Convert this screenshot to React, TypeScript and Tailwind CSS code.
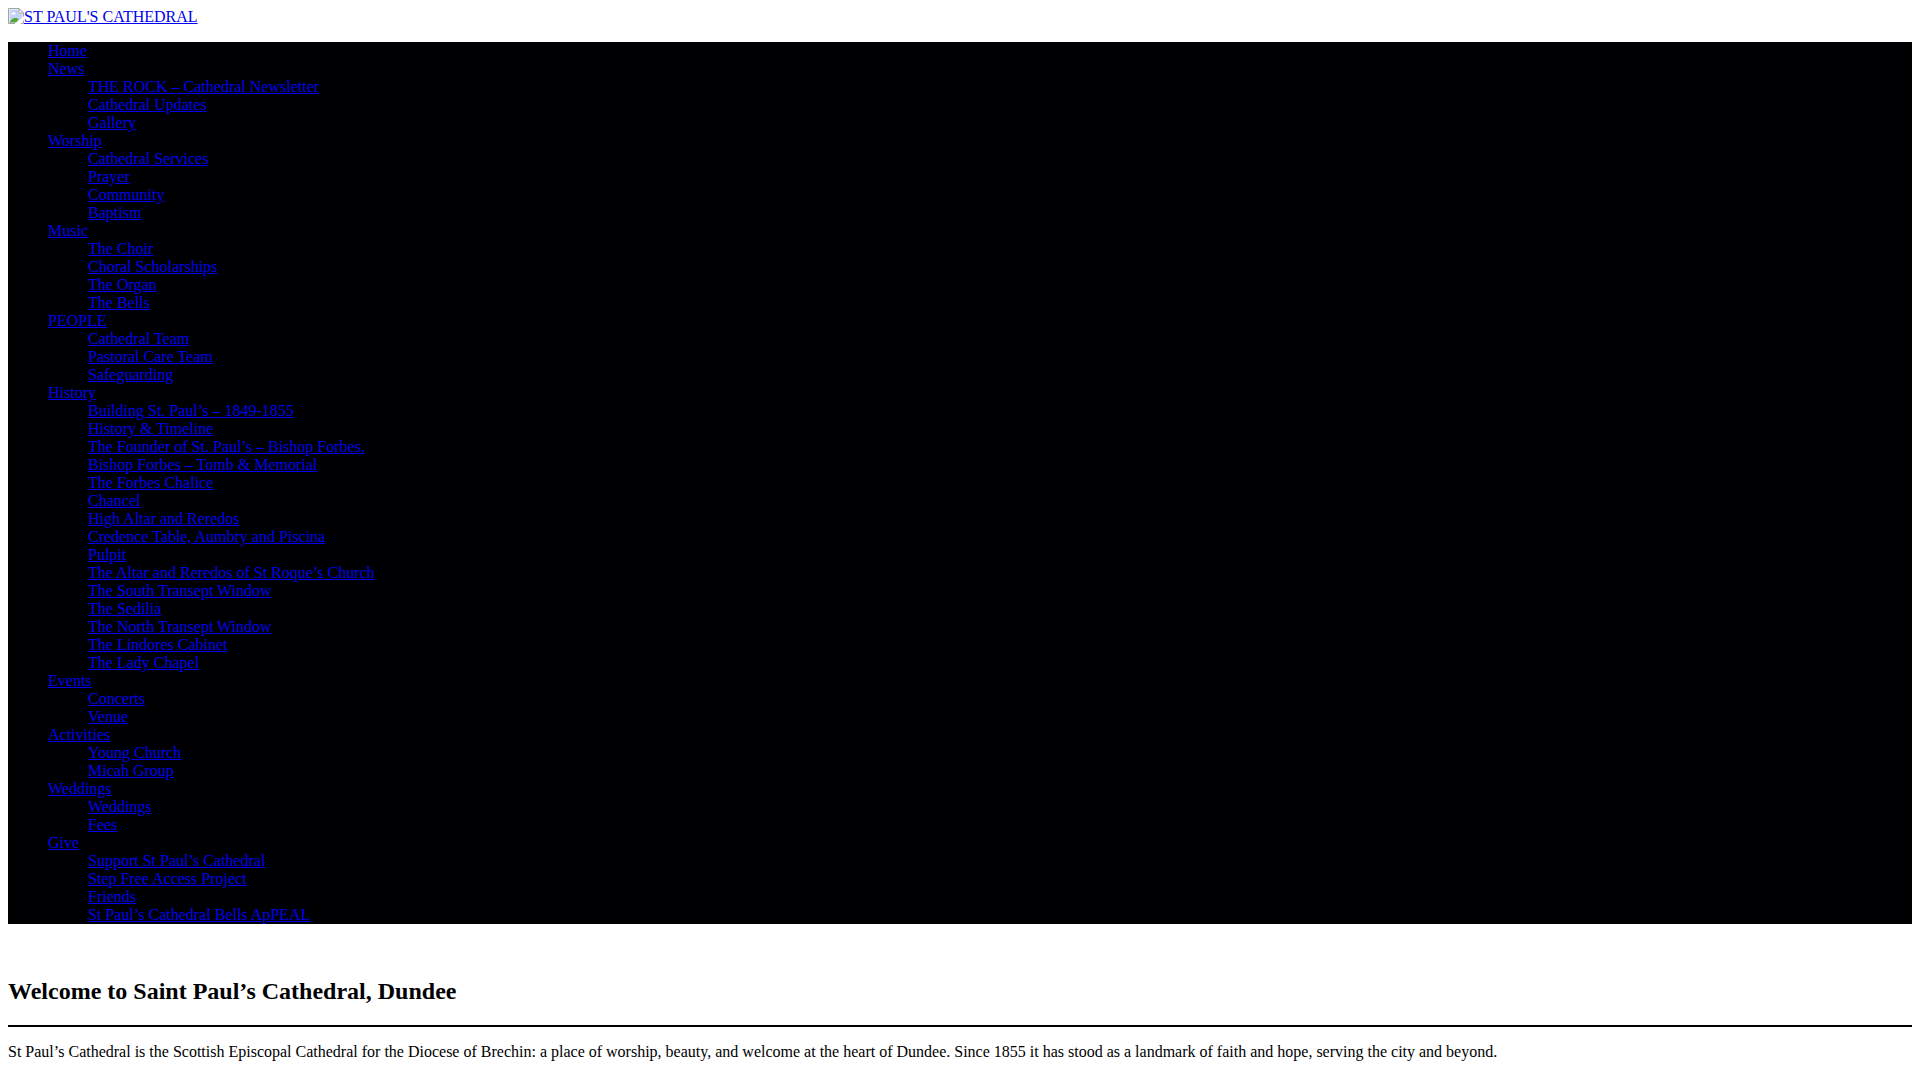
type MenuItem = {
  label: string;
  children?: string[];
};

const menu: MenuItem[] = [
  { label: 'Home' },
  {
    label: 'News',
    children: ['THE ROCK – Cathedral Newsletter', 'Cathedral Updates', 'Gallery'],
  },
  {
    label: 'Worship',
    children: ['Cathedral Services', 'Prayer', 'Community', 'Baptism'],
  },
  {
    label: 'Music',
    children: ['The Choir', 'Choral Scholarships', 'The Organ', 'The Bells'],
  },
  {
    label: 'PEOPLE',
    children: ['Cathedral Team', 'Pastoral Care Team', 'Safeguarding'],
  },
  {
    label: 'History',
    children: [
      'Building St. Paul’s – 1849-1855',
      'History & Timeline',
      'The Founder of St. Paul’s – Bishop Forbes.',
      'Bishop Forbes – Tomb & Memorial',
      'The Forbes Chalice',
      'Chancel',
      'High Altar and Reredos',
      'Credence Table, Aumbry and Piscina',
      'Pulpit',
      'The Altar and Reredos of St Roque’s Church',
      'The South Transept Window',
      'The Sedilia',
      'The North Transept Window',
      'The Lindores Cabinet',
      'The Lady Chapel',
    ],
  },
  { label: 'Events', children: ['Concerts', 'Venue'] },
  { label: 'Activities', children: ['Young Church', 'Micah Group'] },
  { label: 'Weddings', children: ['Weddings', 'Fees'] },
  {
    label: 'Give',
    children: [
      'Support St Paul’s Cathedral',
      'Step Free Access Project',
      'Friends',
      'St Paul’s Cathedral Bells ApPEAL',
    ],
  },
];

const LogoIcon = () => (
  <svg width="16" height="16" viewBox="0 0 16 16" aria-hidden="true" className="shrink-0">
    <path d="M0.5 0.5H11L15.5 5V10L10 15.5H0.5Z" fill="#fff" />
    <path d="M1.5 1.5H10.5V5.5H14.5V9L8.5 14.5H1.5Z" fill="#c1d3f6" />
    <path d="M3 6.5C2.6 5.4 3.6 4.8 4.3 5C4.8 3.7 6.8 3.8 7 5.2C8 5.1 8.2 6 7.8 6.5Z" fill="#fff" />
    <path d="M1.5 14.5C2.6 12 5 10 7.5 10C9 10 10 10.6 10.8 11.5L7.8 14.5Z" fill="#57a639" />
    <path d="M0.5 15.5V0.5H11L15.5 5V8.5M0.5 15.5H7M13 15.5H15.5V12.5" fill="none" stroke="#a3a3a3" />
    <path d="M11 0.5V5H15.5Z" fill="#fff" stroke="#a3a3a3" />
  </svg>
);

const link = 'text-[#0000ee] underline';

const App = () => (
  <div className="m-2 font-['Liberation_Serif',serif] text-base leading-[18px] text-black">
    <header>
      <a href="#" className={`${link} inline-flex h-[18px] items-start align-top`}>
        <LogoIcon />
        <span>ST PAUL'S CATHEDRAL</span>
      </a>
    </header>

    <nav className="mt-4 bg-[#000002]">
      <ul className="list-disc pl-10">
        {menu.map((item) => (
          <li key={item.label}>
            <a href="#" className={link}>{item.label}</a>
            {item.children && (
              <ul className="list-[circle] pl-10">
                {item.children.map((child) => (
                  <li key={child}>
                    <a href="#" className={link}>{child}</a>
                  </li>
                ))}
              </ul>
            )}
          </li>
        ))}
      </ul>
    </nav>

    <main className="pt-[54px]">
      <h2 className="text-2xl leading-[27px] font-bold">Welcome to Saint Paul’s Cathedral, Dundee</h2>
      <hr className="mt-5 border-t-2 border-black" />
      <p className="mt-4">
        St Paul’s Cathedral is the Scottish Episcopal Cathedral for the Diocese of Brechin: a place of
        worship, beauty, and welcome at the heart of Dundee. Since 1855 it has stood as a landmark of
        faith and hope, serving the city and beyond.
      </p>
    </main>
  </div>
);

export default App;
